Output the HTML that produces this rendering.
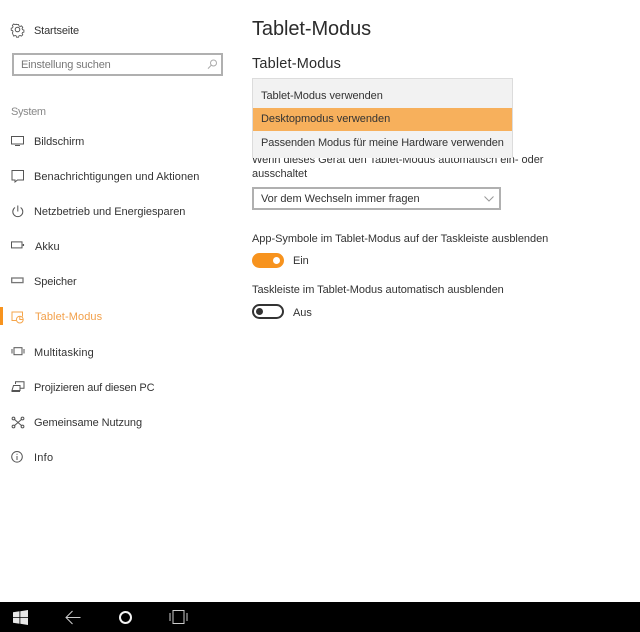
<!DOCTYPE html>
<html><head><meta charset="utf-8"><style>
html,body{margin:0;padding:0;background:#fff}
#p{position:relative;width:640px;height:632px;overflow:hidden;background:#fff;font-family:"Liberation Sans",sans-serif;color:#333;font-size:11px;filter:blur(.3px)}
.t{position:absolute;white-space:nowrap;line-height:14px;letter-spacing:-.05px}
svg{position:absolute;overflow:visible}
svg.i{fill:none;stroke:#555;stroke-width:1}
.b{position:absolute;box-sizing:border-box}
</style></head><body><div id="p">
<svg class="i" style="left:11px;top:23px" width="14" height="14" viewBox="0 0 14 14"><circle cx="6.500" cy="6.500" r="2.300"/><path d="M5.300 1h2.400l.4 1.600 1.300.6 1.500-.8 1.600 1.700-.8 1.400.5 1.300 1.600.5v2.400l-1.600.4-.5 1.200.8 1.400-1.600 1.600-1.500-.8-1.300.5-.4 1.500H5.300l-.4-1.500-1.300-.5-1.500.8L.5 10.600l.8-1.400-.5-1.200L-.8 7.600V5.200L.8 4.700l.5-1.300-.8-1.400L2.100.3l1.500.8 1.300-.6z" transform="translate(.9 .7) scale(.87)"/></svg>
<div class="t" style="left:34px;top:24px;letter-spacing:-.15px">Startseite</div>
<div class="b" style="left:12px;top:53px;width:211px;height:23px;border:2px solid #b0b0b0"></div>
<div class="t" style="left:21px;top:58px;color:#777;letter-spacing:-.15px">Einstellung suchen</div>
<svg class="i" style="left:207px;top:59px;stroke:#aaa" width="11" height="11" viewBox="0 0 11 11"><circle cx="6.500" cy="4" r="3"/><path d="M4.300 6.200L1 9.600"/></svg>
<div class="t" style="left:11px;top:105px;color:#888;letter-spacing:-.33px">System</div>

<svg class="i" style="left:11px;top:135px" width="14" height="12" viewBox="0 0 14 12"><rect x=".5" y="1.500" width="12" height="7.500"/><path d="M4 10.500h5"/></svg>
<div class="t" style="left:34px;top:135px">Bildschirm</div>
<svg class="i" style="left:11px;top:169px" width="14" height="14" viewBox="0 0 14 14"><path d="M1 1.500h11.500v9.500H6.500L4 13v-2H1z"/></svg>
<div class="t" style="left:34px;top:170px;letter-spacing:.05px">Benachrichtigungen und Aktionen</div>
<svg class="i" style="left:11px;top:205px" width="14" height="14" viewBox="0 0 14 14"><path d="M4 2.500a5 5 0 1 0 5.600 0M6.800 .5v6"/></svg>
<div class="t" style="left:34px;top:205px;letter-spacing:-.03px">Netzbetrieb und Energiesparen</div>
<svg class="i" style="left:11px;top:241px" width="14" height="10" viewBox="0 0 14 10"><rect x=".5" y=".9" width="10.500" height="6"/><path d="M12.400 3v2" stroke-width="1.300"/></svg>
<div class="t" style="left:35px;top:240px;letter-spacing:.05px">Akku</div>
<svg class="i" style="left:11px;top:277px;stroke:#777;stroke-width:1.300" width="14" height="10" viewBox="0 0 14 10"><rect x=".7" y="1" width="11.300" height="4.600"/></svg>
<div class="t" style="left:34px;top:275px;letter-spacing:-.1px">Speicher</div>

<div class="b" style="left:0;top:307px;width:3px;height:18px;background:#f7931e"></div>
<svg class="i" style="left:11px;top:311px;stroke:#f5a54a" width="14" height="14" viewBox="0 0 14 14"><path d="M5 9.500H1V1h10.500v4.500"/><circle cx="8.800" cy="8.600" r="3.400"/><path d="M8.800 5.500v3h3"/></svg>
<div class="t" style="left:35px;top:310px;color:#f2a04a;letter-spacing:.1px">Tablet-Modus</div>

<svg class="i" style="left:11px;top:347px" width="14" height="10" viewBox="0 0 14 10"><rect x="3" y=".7" width="8" height="7"/><path d="M1 2v4.500M13 2v4.500"/></svg>
<div class="t" style="left:34px;top:346px;letter-spacing:.15px">Multitasking</div>
<svg class="i" style="left:11px;top:381px" width="14" height="12" viewBox="0 0 14 12"><path d="M4.500 3V.8h8.500v6.400H9"/><path d="M2.500 4.500h6.500v5H1z"/><path d="M.5 10.500h8.500"/></svg>
<div class="t" style="left:34px;top:381px;letter-spacing:-.15px">Projizieren auf diesen PC</div>
<svg class="i" style="left:11px;top:416px" width="14" height="13" viewBox="0 0 14 13"><path d="M3 3l8 7M11 3l-8 7"/><circle cx="2.500" cy="2.500" r="1.400"/><circle cx="11.500" cy="2.500" r="1.400"/><circle cx="2.500" cy="10.500" r="1.400"/><circle cx="11.500" cy="10.500" r="1.400"/></svg>
<div class="t" style="left:34px;top:416px;letter-spacing:-.08px">Gemeinsame Nutzung</div>
<svg class="i" style="left:11px;top:451px" width="13" height="13" viewBox="0 0 13 13"><circle cx="6" cy="5.800" r="5.300"/><path d="M6 5v4M6 2.800v1"/></svg>
<div class="t" style="left:34px;top:451px;letter-spacing:.25px">Info</div>

<div class="t" style="left:252px;top:16px;font-size:20px;line-height:26px;color:#2b2b2b;letter-spacing:-.08px">Tablet-Modus</div>
<div class="t" style="left:252px;top:55px;font-size:14.500px;line-height:18px;color:#2b2b2b;letter-spacing:.17px">Tablet-Modus</div>

<div class="t" style="left:252px;top:153px;letter-spacing:-.03px">Wenn dieses Gerät den Tablet-Modus automatisch ein- oder</div>
<div class="t" style="left:252px;top:167px">ausschaltet</div>

<div class="b" style="left:252px;top:78px;width:261px;height:80px;background:#f2f2f2;border:1px solid #dcdcdc;border-bottom:0"></div>
<div class="t" style="left:261px;top:89px;letter-spacing:-.05px">Tablet-Modus verwenden</div>
<div class="b" style="left:253px;top:108px;width:259px;height:23px;background:#f7b05c"></div>
<div class="t" style="left:261px;top:112px;letter-spacing:-.05px">Desktopmodus verwenden</div>
<div class="t" style="left:261px;top:136px;letter-spacing:-.11px">Passenden Modus für meine Hardware verwenden</div>

<div class="b" style="left:252px;top:187px;width:249px;height:23px;border:2px solid #b0b0b0"></div>
<div class="t" style="left:261px;top:192px;letter-spacing:-.05px">Vor dem Wechseln immer fragen</div>
<svg class="i" style="left:484px;top:196px;stroke:#999" width="10" height="6" viewBox="0 0 10 6"><path d="M.5 .5L5 5L9.500 .5"/></svg>

<div class="t" style="left:252px;top:232px;letter-spacing:-.03px">App-Symbole im Tablet-Modus auf der Taskleiste ausblenden</div>
<div class="b" style="left:252px;top:253px;width:32px;height:15px;border-radius:8px;background:#f7931e"></div>
<div class="b" style="left:273px;top:257px;width:7px;height:7px;border-radius:50%;background:#fff"></div>
<div class="t" style="left:293px;top:254px">Ein</div>

<div class="t" style="left:252px;top:283px;letter-spacing:-.05px">Taskleiste im Tablet-Modus automatisch ausblenden</div>
<div class="b" style="left:252px;top:304px;width:32px;height:15px;border-radius:8px;border:2px solid #333"></div>
<div class="b" style="left:256px;top:308px;width:7px;height:7px;border-radius:50%;background:#333"></div>
<div class="t" style="left:293px;top:306px">Aus</div>

<div class="b" style="left:0;top:602px;width:640px;height:30px;background:#000"></div>
<svg style="left:13px;top:610px" width="15" height="15" viewBox="0 0 15 15" fill="#e8e8e8"><path d="M0 2.200L6.500 1.300V7H0zM7.300 1.200L15 0V7H7.300zM0 7.800H6.500V13.700L0 12.800zM7.300 7.800H15V15L7.300 13.800z"/></svg>
<svg style="left:65px;top:610px" width="16" height="15" viewBox="0 0 16 15" fill="none" stroke="#ccc" stroke-width="1"><path d="M15.500 7.500H1M7.500 1L1 7.500L7.500 14"/></svg>
<svg style="left:118px;top:610px" width="15" height="15" viewBox="0 0 15 15" fill="none" stroke="#f2f2f2" stroke-width="2"><circle cx="7.500" cy="7.500" r="5.500"/></svg>
<svg style="left:169px;top:609px" width="20" height="16" viewBox="0 0 20 16" fill="none" stroke="#ccc" stroke-width="1"><rect x="4" y="1.500" width="11" height="13"/><path d="M1 4v8M18 4v8"/></svg>
</div></body></html>
